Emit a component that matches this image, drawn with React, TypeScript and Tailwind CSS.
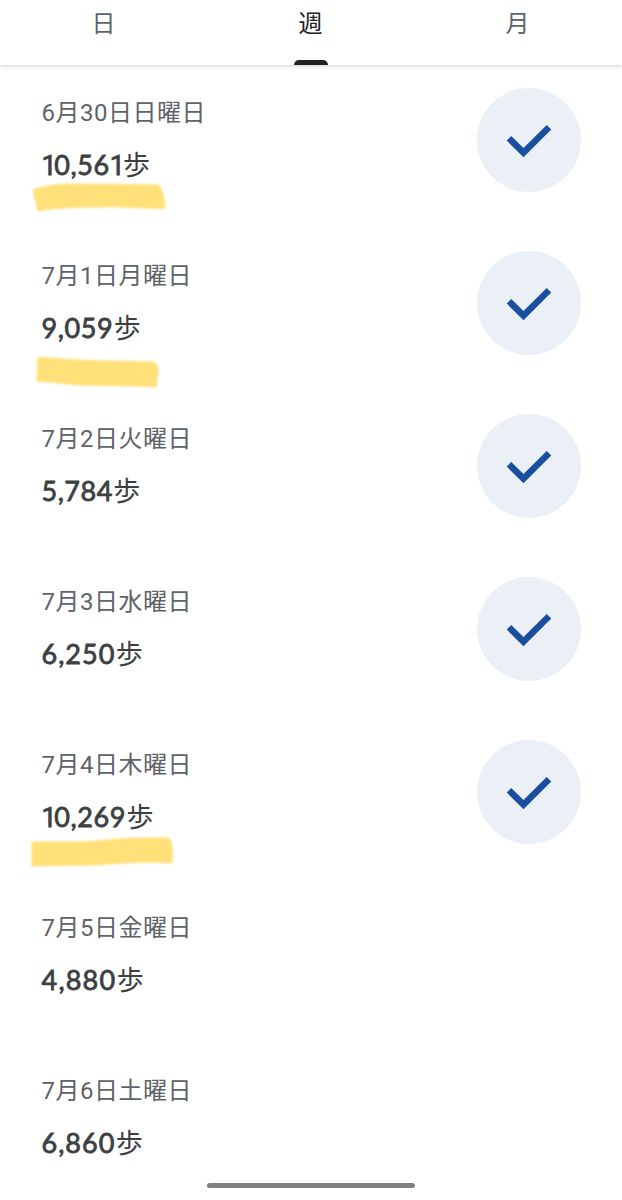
import React from 'react';
import clsx from 'clsx';

type Marker = {
  path: string;
};

type Day = {
  date: string;
  steps: string;
  done: boolean;
  tracking: string;
  marker?: Marker;
};

const tabs = ['日', '週', '月'];

const days: Day[] = [
  {
    date: '6月30日日曜日',
    steps: '10,561',
    done: true,
    tracking: 'tracking-[0.6px]',
    marker: { path: 'M33 102 C50 96 65 96 80 96 L157 97 C162 98 164 110 165 120 C140 121 125 118 100 119 C75 119 55 120 38 123 Z' },
  },
  {
    date: '7月1日月曜日',
    steps: '9,059',
    done: true,
    tracking: 'tracking-[0.6px]',
    marker: { path: 'M38 106 C60 108 85 110 110 110 L152 111 C157 112 158 114 158 120 L156 136 C130 134 105 135 80 134 L37 130 Z' },
  },
  { date: '7月2日火曜日', steps: '5,784', done: true, tracking: 'tracking-[0.5px]' },
  { date: '7月3日水曜日', steps: '6,250', done: true, tracking: 'tracking-[1px]' },
  {
    date: '7月4日木曜日',
    steps: '10,269',
    done: true,
    tracking: 'tracking-[0.6px]',
    marker: { path: 'M32 102 L85 102 C110 100 125 98 145 98 L168 98 C172 100 173 108 172 123 C145 121 120 123 95 125 L32 126 Z' },
  },
  { date: '7月5日金曜日', steps: '4,880', done: false, tracking: 'tracking-[1.2px]' },
  { date: '7月6日土曜日', steps: '6,860', done: false, tracking: 'tracking-[1px]' },
];

const CheckBadge: React.FC = () => (
  <div className="flex h-[104px] w-[104px] items-center justify-center rounded-full bg-[#ebf0f7]">
    <svg width="104" height="104" viewBox="0 0 104 104" fill="none">
      <path d="M32 50.3 L46.5 64.6 L72 39.3" stroke="#1a4f9f" strokeWidth="6.5" />
    </svg>
  </div>
);

const Highlight: React.FC<Marker> = ({ path }) => (
  <svg className="absolute top-0 left-0 blur-[1.2px]" width="200" height="150" viewBox="0 0 200 150">
    <path d={path} fill="#ffe079" stroke="#ffe079" strokeWidth="1" strokeLinejoin="round" />
  </svg>
);

// Lato's "1" has a foot, so that digit is set in Roboto with a tighter advance
const Steps: React.FC<{ value: string; tracking: string }> = ({ value, tracking }) => (
  <span
    className={clsx(
      "font-['Lato','Noto_Sans_CJK_JP',sans-serif] font-normal [-webkit-text-stroke:0.8px_#3c4043]",
      tracking
    )}
  >
    {value.split('').map((char, i) =>
      char === '1' ? (
        <span key={i} className="font-['Roboto',sans-serif] tracking-[-2.4px]">
          {char}
        </span>
      ) : (
        char
      )
    )}
  </span>
);

const DayRow: React.FC<{ day: Day }> = ({ day }) => (
  <li className="relative flex h-[163px] items-start justify-between pr-[41.5px] pl-[41.5px]">
    {day.marker && <Highlight path={day.marker.path} />}
    <div className="relative flex flex-col">
      <span className="mt-[7px] h-9 text-[24px] leading-9 tracking-[0.5px] whitespace-nowrap text-[#5f6368]">
        {day.date}
      </span>
      <span className="mt-[16px] flex h-9 items-center text-[27px] leading-9 whitespace-nowrap text-[#3c4043]">
        <Steps value={day.steps} tracking={day.tracking} />
        <span className="ml-[0.5px] pt-px">歩</span>
      </span>
    </div>
    {day.done && <CheckBadge />}
  </li>
);

const App: React.FC = () => {
  return (
    <div className="relative h-[1200px] w-[622px] overflow-hidden bg-white font-['Roboto','Noto_Sans_CJK_JP',sans-serif]">
      <nav className="relative flex h-[65px] justify-center bg-white shadow-[0_1px_4px_rgba(0,0,0,0.2)]">
        {tabs.map((tab) => (
          <button
            key={tab}
            className={clsx(
              'flex w-[207px] flex-col items-center justify-between text-[24px] leading-[48px]',
              tab === '週' ? 'text-[#202124]' : 'text-[#5f6368]'
            )}
          >
            <span className="pr-px">{tab}</span>
            {tab === '週' && <span className="h-[5px] w-[34px] rounded-t-[5px] bg-[#202124]" />}
          </button>
        ))}
      </nav>

      <ul className="pt-[23px]">
        {days.map((day) => (
          <DayRow key={day.date} day={day} />
        ))}
      </ul>

      <div className="absolute bottom-[12px] left-[207px] h-[5px] w-[208px] rounded-full bg-[#808080]" />
    </div>
  );
};

export default App;
